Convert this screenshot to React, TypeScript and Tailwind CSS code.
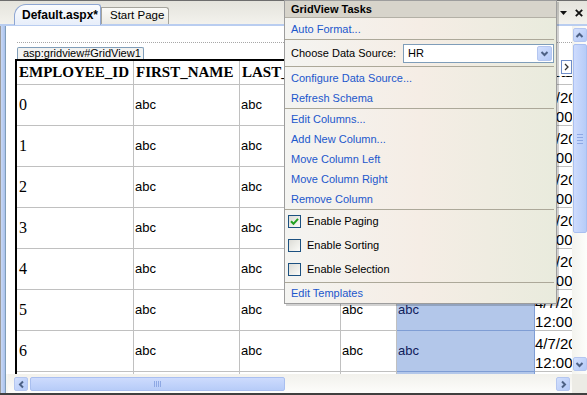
import React from "react";

const colW = ["w-[117px]", "w-[106px]", "w-[101px]", "w-[56px]", "w-[138px]", "w-[60px]"];
const headers = ["EMPLOYEE_ID", "FIRST_NAME", "LAST_NAME", "EMAIL", "PHONE_NUMBER", "HIRE_DATE"];
const rows = ["0", "1", "2", "3", "4", "5", "6", "7"];

const Chev: React.FC<{ dir: "up" | "down" | "left" | "right"; size?: number }> = ({ dir, size = 9 }) => {
  const d = {
    up: "M1.5 6 L4.5 3 L7.5 6",
    down: "M1.5 3 L4.5 6 L7.5 3",
    left: "M6 1.5 L3 4.5 L6 7.5",
    right: "M3 1.5 L6 4.5 L3 7.5",
  }[dir];
  return (
    <svg width={size} height={size} viewBox="0 0 9 9">
      <path d={d} stroke="#4d6185" strokeWidth="2" fill="none" />
    </svg>
  );
};

const ScrollBtn: React.FC<{ dir: "up" | "down" | "left" | "right"; className?: string }> = ({ dir, className }) => (
  <div
    className={
      "w-[14px] h-[14px] rounded-[2px] border border-[#b4c6f0] bg-gradient-to-br from-[#d3e0fd] to-[#b4c9f7] flex items-center justify-center " +
      (className || "")
    }
  >
    <Chev dir={dir} />
  </div>
);

const Link: React.FC<{ children: React.ReactNode }> = ({ children }) => (
  <div className="h-[20px] flex items-center pl-[6px] text-[#1c57cc]">{children}</div>
);

const Sep = () => <div className="h-px bg-[#aca899] mr-[2px]" />;

const Check: React.FC<{ checked?: boolean; label: string }> = ({ checked, label }) => (
  <div className="h-[24px] flex items-center pl-[3px]">
    <span className="w-[13px] h-[13px] border border-[#1c5180] bg-gradient-to-br from-[#dcdcd6] to-[#fbfbf8] flex items-center justify-center">
      {checked && (
        <svg width="9" height="9" viewBox="0 0 9 9">
          <path d="M1 4.2 L3.5 6.8 L8 1.8" stroke="#21a121" strokeWidth="2" fill="none" />
        </svg>
      )}
    </span>
    <span className="ml-[6px] text-black">{label}</span>
  </div>
);

function TasksPopup() {
  return (
    <div className="absolute left-[284px] top-0 w-[273px] h-[304px] border border-[#9d9d9d] bg-gradient-to-r from-[#f4f4f1] via-[#f5ede5] to-[#e9ebdd] shadow-[2px_2px_0_rgba(0,0,0,0.18)] text-[11px] font-['Liberation_Sans',Arial,sans-serif] z-10">
      <div className="h-[17px] bg-[#d7d4cb] border-b border-[#b3b0a6] flex items-center pl-[6px] font-bold text-black">
        GridView Tasks
      </div>
      <div className="pt-[1px]">
        <Link>Auto Format...</Link>
      </div>
      <Sep />
      <div className="h-[26px] flex items-center">
        <span className="w-[118px] pl-[6px] text-black">Choose Data Source:</span>
        <div className="w-[151px] h-[19px] border border-[#7f9db9] bg-white flex items-center justify-between">
          <span className="pl-[4px] text-black">HR</span>
          <span className="w-[15px] h-[15px] mr-[1px] rounded-[2px] border border-[#b4c6f0] bg-gradient-to-br from-[#d3e0fd] to-[#b4c9f7] flex items-center justify-center">
            <Chev dir="down" />
          </span>
        </div>
      </div>
      <Sep />
      <div className="pt-[1px]">
        <Link>Configure Data Source...</Link>
        <Link>Refresh Schema</Link>
      </div>
      <Sep />
      <Link>Edit Columns...</Link>
      <Link>Add New Column...</Link>
      <Link>Move Column Left</Link>
      <Link>Move Column Right</Link>
      <Link>Remove Column</Link>
      <Sep />
      <div className="-mt-[1px]">
        <Check checked label="Enable Paging" />
        <Check label="Enable Sorting" />
        <Check label="Enable Selection" />
      </div>
      <div className="mt-[1px]">
        <Sep />
      </div>
      <Link>Edit Templates</Link>
    </div>
  );
}

function Grid() {
  return (
    <div className="ml-[7px] w-[580px] border-l-2 border-t-2 border-black">
      <div className="flex h-[24px]">
        {headers.map((h, i) => (
          <div
            key={h}
            className={
              colW[i] +
              " shrink-0 border-r border-b border-[#c0c0c0] flex items-center pl-[2px] overflow-hidden whitespace-nowrap font-['Liberation_Serif','Times_New_Roman',serif] font-bold text-[15px] text-black"
            }
          >
            {h}
          </div>
        ))}
      </div>
      {rows.map((r) => (
        <div key={r} className="flex h-[41px]">
          <div className="w-[117px] shrink-0 border-r border-b border-[#c0c0c0] flex items-center pl-[2px] font-['Liberation_Serif',serif] text-[16px] text-black">
            {r}
          </div>
          <div className="w-[106px] shrink-0 border-r border-b border-[#c0c0c0] flex items-center pl-[1px] text-[13px] text-black">
            abc
          </div>
          <div className="w-[101px] shrink-0 border-r border-b border-[#c0c0c0] flex items-center pl-[1px] text-[13px] text-black">
            abc
          </div>
          <div className="w-[56px] shrink-0 border-r border-b border-[#c0c0c0] flex items-center pl-[1px] text-[13px] text-black">
            abc
          </div>
          <div className="w-[138px] shrink-0 border-r border-b border-[#7f9dd4] bg-[#b3c7ea] flex items-center pl-[1px] text-[13px] text-[#10205a]">
            abc
          </div>
          <div className="w-[60px] shrink-0 border-b border-[#c0c0c0] flex items-center pt-[3px] text-[15px] leading-[19px] text-black overflow-hidden whitespace-nowrap">
            <div>
              <div>4/7/2008</div>
              <div>12:00:00 AM</div>
            </div>
          </div>
        </div>
      ))}
    </div>
  );
}

export default function App() {
  return (
    <div className="w-[587px] h-[395px] relative overflow-hidden bg-[#ecebe5] flex flex-col font-['Liberation_Sans',Arial,sans-serif]">
      <div className="h-px bg-[#6d6d6d] shrink-0" />
      {/* tab strip */}
      <div className="h-[23px] shrink-0 flex items-end pl-[14px] bg-gradient-to-b from-[#e4e3dc] to-[#f3f2ed]">
        <div className="relative z-[1] -mb-[1px] h-[21px] w-[87px] rounded-tl-[12px] rounded-tr-[3px] border border-b-0 border-[#8ea6d3] bg-gradient-to-b from-[#fbfcfe] to-[#e7eefa] flex items-center pl-[7px] text-[12px] font-bold text-black">
          Default.aspx*
        </div>
        <div className="h-[17px] w-[68px] rounded-tr-[3px] border border-b-0 border-[#a5a49c] bg-gradient-to-b from-[#fafaf7] to-[#ecebe5] flex items-center pl-[8px] text-[11.5px] text-black">
          Start Page
        </div>
        <div className="ml-auto self-center flex items-center gap-[8px] pr-[4px] pt-[1px]">
          <svg width="7" height="4" viewBox="0 0 7 4">
            <path d="M0 0 H7 L3.5 4 Z" fill="#111" />
          </svg>
          <svg width="8" height="8" viewBox="0 0 8 8">
            <path d="M0.8 0.8 L7.2 7.2 M7.2 0.8 L0.8 7.2" stroke="#111" strokeWidth="1.8" />
          </svg>
        </div>
      </div>
      {/* document frame */}
      <div className="flex-1 flex flex-col border-t-2 border-[#b9cdf0]">
        <div className="h-[348px] flex">
          <div className="w-[8px] shrink-0 flex">
            <div className="w-px bg-[#9c9c9c]" />
            <div className="w-[4px] bg-gradient-to-r from-[#c9d9f6] to-[#a9c1ec]" />
            <div className="w-px bg-[#7f9db9]" />
            <div className="w-[2px] bg-white" />
          </div>
          <div className="w-[564px] shrink-0 bg-white relative overflow-hidden">
            <div className="h-[16px]" />
            <div className="ml-[9px] border-t border-dotted border-[#a7a7a7]" />
            <div className="h-[4px]" />
            <div className="ml-[9px] w-[127px] h-[12px] border border-b-0 border-[#7f9db9] rounded-t-[2px] bg-[#f3f3f1] flex items-center pl-[5px] text-[11px] leading-[11px] text-black">
              asp:gridview#GridView1
            </div>
            <Grid />
            <div className="absolute left-[549px] top-[33px] w-[15px] h-[17px] bg-white flex items-start justify-end pt-[1px]">
              <div className="w-[11px] h-[14px] border border-[#6f8dc8] bg-white flex items-center justify-center">
                <svg width="5" height="8" viewBox="0 0 5 8">
                  <path d="M1 1 L4 4 L1 7" stroke="#333" strokeWidth="1.3" fill="none" />
                </svg>
              </div>
            </div>
          </div>
          {/* vertical scrollbar */}
          <div className="w-[15px] shrink-0 bg-gradient-to-r from-[#f3f3ee] to-[#fdfdfb] flex flex-col items-center pt-[2px] pb-[3px]">
            <ScrollBtn dir="up" />
            <div className="mt-[2px] w-[14px] h-[189px] rounded-[2px] border border-[#a9bff0] bg-gradient-to-r from-[#cddbfd] to-[#b7ccf8] flex flex-col items-center justify-center gap-[2px]">
              <div className="w-[6px] h-px bg-[#8ea8e4]" />
              <div className="w-[6px] h-px bg-[#8ea8e4]" />
              <div className="w-[6px] h-px bg-[#8ea8e4]" />
              <div className="w-[6px] h-px bg-[#8ea8e4]" />
            </div>
            <div className="flex-1" />
            <ScrollBtn dir="down" />
          </div>
        </div>
        {/* horizontal scrollbar row */}
        <div className="h-[19px] flex">
          <div className="w-[8px] shrink-0 flex">
            <div className="w-px bg-[#9c9c9c]" />
            <div className="w-[4px] bg-gradient-to-r from-[#c9d9f6] to-[#a9c1ec]" />
            <div className="w-px bg-[#7f9db9]" />
            <div className="w-[2px] bg-[#f6f6f2]" />
          </div>
          <div className="w-[564px] shrink-0 bg-gradient-to-b from-[#f2f1ec] to-[#fdfdfb] flex items-center pl-[6px] pr-[2px] pt-[1px]">
            <ScrollBtn dir="left" />
            <div className="ml-[2px] w-[255px] h-[14px] rounded-[2px] border border-[#a9bff0] bg-gradient-to-b from-[#cddbfd] to-[#b7ccf8] flex items-center justify-center gap-[1px]">
              <div className="w-px h-[6px] bg-[#8ea8e4]" />
              <div className="w-px h-[6px] bg-[#8ea8e4]" />
              <div className="w-px h-[6px] bg-[#8ea8e4]" />
              <div className="w-px h-[6px] bg-[#8ea8e4]" />
            </div>
            <div className="flex-1" />
            <ScrollBtn dir="right" />
          </div>
          <div className="w-[15px] shrink-0 bg-[#ecebe5]" />
        </div>
        <div className="flex-1 bg-[#ecebe5]" />
      </div>
      <div className="h-[2px] shrink-0 bg-[#404040]" />
      <TasksPopup />
    </div>
  );
}
